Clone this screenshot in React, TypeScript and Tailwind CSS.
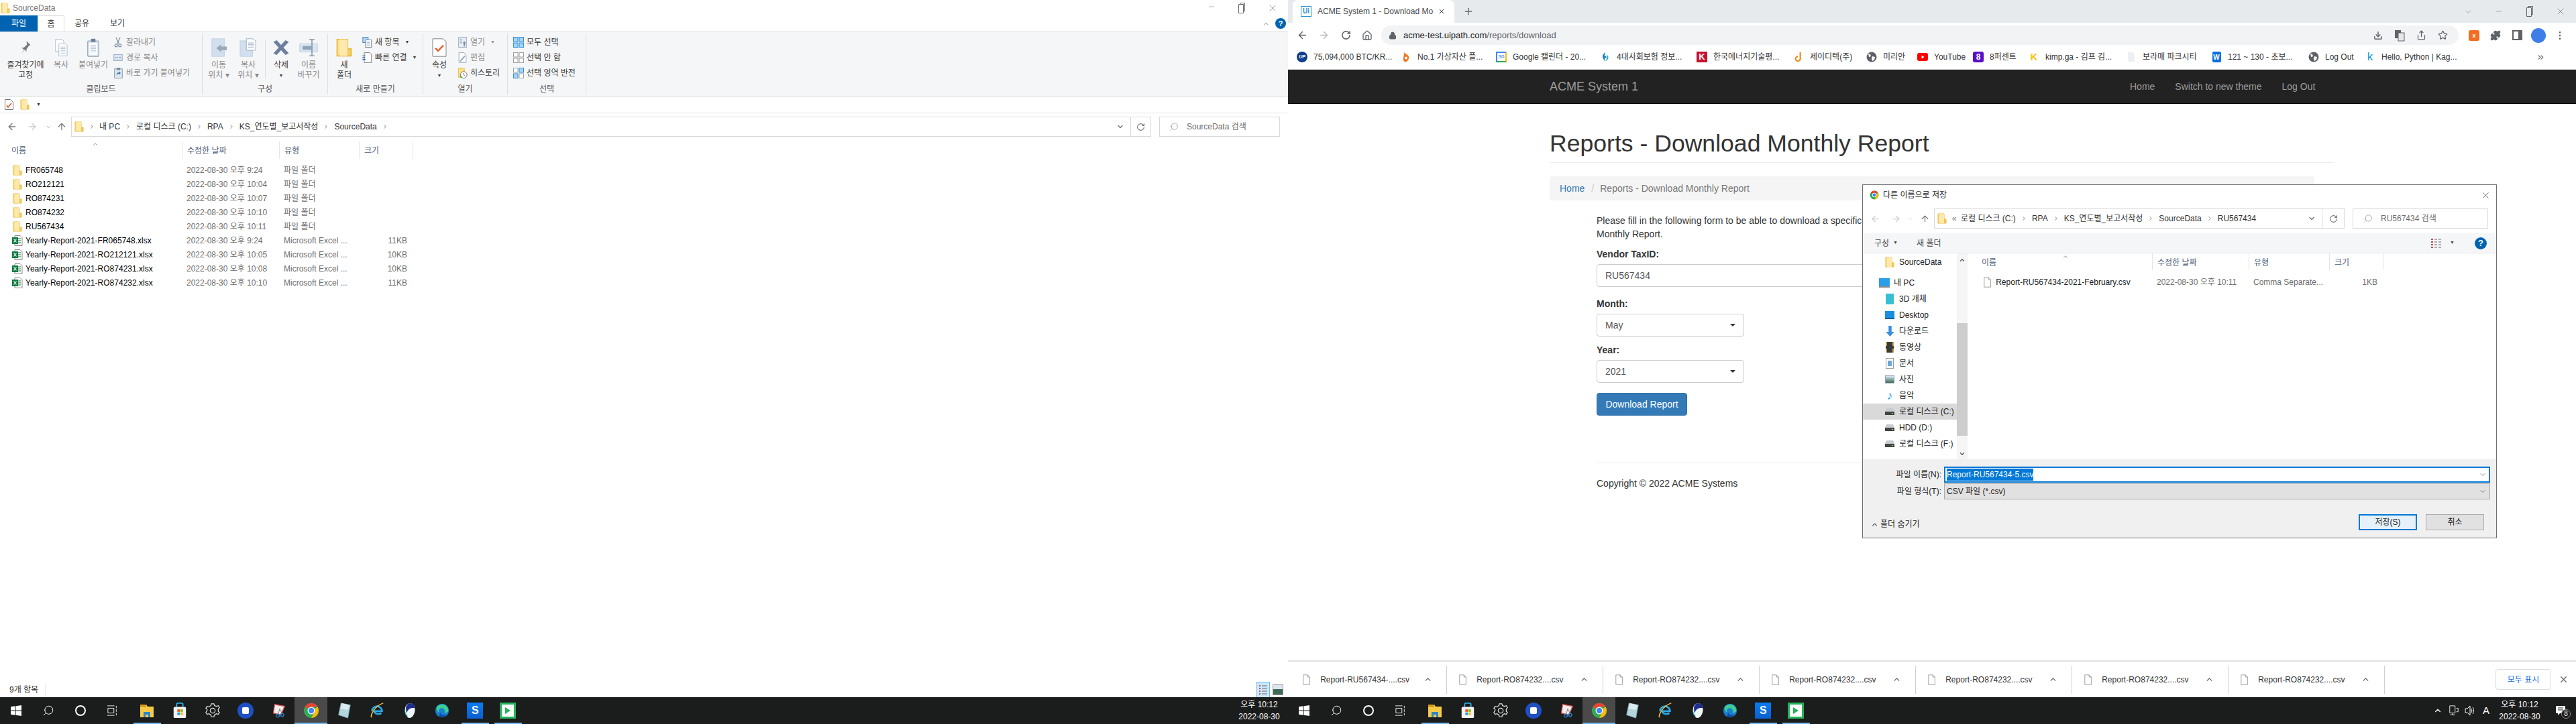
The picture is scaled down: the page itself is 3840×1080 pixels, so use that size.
import type { ReactNode } from "react";
import {
  ArrowLeft,
  ArrowRight,
  ArrowUp,
  ChevronDown,
  ChevronRight,
  ChevronUp,
  ChevronsRight,
  Download,
  EllipsisVertical,
  House,
  Lock,
  Minus,
  Plus,
  Puzzle,
  RotateCw,
  Search,
  Share,
  Star,
  X,
} from "lucide-react";

const Folder = ({ s = 16 }: { s?: number }) => (
  <svg width={s} height={s} viewBox="0 0 16 16" className="shrink-0">
    <path d="M2 1h9v14H2z" fill="#ffe08a" stroke="#e8b93e" />
    <path d="M11 15V9l3 0v6z" fill="#f6cf63" stroke="#e8b93e" />
    <path d="M4 1h7v14H4z" fill="#ffe9ad" />
  </svg>
);

const FileBlank = ({ h = 16 }: { h?: number }) => (
  <svg width={h * 0.7} height={h} viewBox="0 0 14 20" className="shrink-0">
    <path d="M1 1h8l4 4v14H1z" fill="#fff" stroke="#8a8a8a" />
    <path d="M9 1v4h4" fill="none" stroke="#8a8a8a" />
  </svg>
);

const Excel = () => (
  <svg width="16" height="16" viewBox="0 0 16 16" className="shrink-0">
    <path d="M4 .5h8l3 3v12H4z" fill="#fff" stroke="#8a8a8a" />
    <path d="M9 5h4M9 8h4M9 11h4" stroke="#1e7145" />
    <rect x="0" y="3" width="9" height="10" fill="#107c41" />
    <path d="M2.500 5.500l4 5M6.500 5.500l-4 5" stroke="#fff" strokeWidth="1.200" />
  </svg>
);

const Chrome = ({ s = 16 }: { s?: number }) => (
  <svg width={s} height={s} viewBox="0 0 24 24" className="shrink-0">
    <circle cx="12" cy="12" r="11" fill="#34a853" />
    <path d="M12 1a11 11 0 0 1 9.500 5.500H12L5 9 3 5.500A11 11 0 0 1 12 1z" fill="#ea4335" />
    <path d="M21.500 6.500A11 11 0 0 1 12 23l5-9-1-4 5.500-3.500z" fill="#fbbc04" />
    <circle cx="12" cy="12" r="5.500" fill="#fff" />
    <circle cx="12" cy="12" r="4.200" fill="#4285f4" />
  </svg>
);

const Globe = () => (
  <svg width="16" height="16" viewBox="0 0 16 16" className="shrink-0">
    <circle cx="8" cy="8" r="7.500" fill="#5f6368" />
    <path d="M3 3l3 1 1 3-3 1zM9 7l4 1-1 4-3 2-1-4z" fill="#fff" />
  </svg>
);

const Favicon = ({ kind }: { kind: string }) => {
  if (kind === "up")
    return <span className="w-4 h-4 rounded-full bg-[#123f8c] text-white text-[7px] font-bold italic flex items-center justify-center">UP</span>;
  if (kind === "bithumb")
    return (
      <svg width="14" height="16" viewBox="0 0 16 20">
        <path d="M5 1l3 4c4 1 6 4 5 8-1 4-4 6-6 6-3 0-5-3-4-7z" fill="#f37321" />
        <circle cx="8" cy="12" r="2.500" fill="#fff" />
      </svg>
    );
  if (kind === "cal")
    return (
      <span className="w-4 h-4 bg-white border-2 border-[#4285f4] border-b-[#34a853] border-r-[#fbbc04] text-[8px] leading-none text-[#1a73e8] flex items-center justify-center">30</span>
    );
  if (kind === "four")
    return (
      <svg width="14" height="16" viewBox="0 0 16 20">
        <path d="M8 1C3 5 2 9 4 13l4 6c-2-6-2-12 0-18z" fill="#1f78c8" />
        <path d="M10 5c4 3 5 7 2 10l-4 3c3-4 4-9 2-13z" fill="#28b5a0" />
        <circle cx="8" cy="10" r="2" fill="#1f78c8" />
      </svg>
    );
  if (kind === "k")
    return <span className="w-4 h-4 bg-[#c4122f] text-white text-[13px] font-bold flex items-center justify-center">K</span>;
  if (kind === "j")
    return (
      <svg width="14" height="16" viewBox="0 0 16 18">
        <path d="M11 1v11a4 4 0 1 1-4-4" fill="none" stroke="#f08a1d" strokeWidth="2.500" />
      </svg>
    );
  if (kind === "globe") return <Globe />;
  if (kind === "yt")
    return (
      <svg width="16" height="16" viewBox="0 0 16 16">
        <rect y="2" width="16" height="12" rx="3" fill="#f00" />
        <path d="M6.500 5.500v5l4-2.500z" fill="#fff" />
      </svg>
    );
  if (kind === "eight")
    return <span className="w-4 h-4 rounded-[3px] bg-[#5a0fc8] text-white text-[12px] font-bold flex items-center justify-center">8</span>;
  if (kind === "kimp") return <span className="w-4 h-4 text-[#f7c600] text-[15px] font-bold leading-4 text-center">K</span>;
  if (kind === "blank")
    return (
      <svg width="12" height="16" viewBox="0 0 14 20">
        <path d="M1 1h8l4 4v14H1z" fill="#eceff1" />
      </svg>
    );
  if (kind === "w")
    return <span className="w-[13px] h-4 rounded-[2px] bg-[#0b6fe0] text-white text-[10px] font-bold flex items-center justify-center">W</span>;
  return <span className="w-4 h-4 text-[#0f9bd7] text-[17px] leading-4 text-center">k</span>;
};

const IconBox = ({ children }: { children: ReactNode }) => (
  <span className="w-4 h-4 shrink-0 flex items-center justify-center">{children}</span>
);

const LargeButton = ({ w, icon, lines, off, caret }: { w: number; icon: ReactNode; lines: string[]; off?: boolean; caret?: boolean }) => (
  <div className={`flex flex-col items-center shrink-0 ${off ? "text-[#8a8a8a]" : "text-[#3a3a3a]"}`} style={{ width: w }}>
    <div className="h-[39px] flex items-center justify-center">{icon}</div>
    {lines.map((l) => (
      <div key={l} className="h-[15px] leading-[15px] whitespace-nowrap">{l}</div>
    ))}
    {caret && <div className="h-[15px] leading-[15px] text-[7px]">▼</div>}
  </div>
);

const SmallButton = ({ icon, label, off, caret }: { icon: ReactNode; label: string; off?: boolean; caret?: boolean }) => (
  <div className={`h-[22px] flex items-center gap-1 whitespace-nowrap ${off ? "text-[#8a8a8a]" : "text-[#3a3a3a]"}`}>
    <IconBox>{icon}</IconBox>
    <span>{label}</span>
    {caret && <span className="text-[7px] ml-1">▼</span>}
  </div>
);

const RibbonGroup = ({ w, label, children }: { w: number; label: string; children: ReactNode }) => (
  <div className="mt-[2px] h-[91px] flex flex-col border-r border-[#dcdddf] shrink-0" style={{ width: w }}>
    <div className="h-[75px] pt-px flex">{children}</div>
    <div className="h-4 leading-4 text-center text-[#555]">{label}</div>
  </div>
);

const Docs = ({ c = "#9fb3c8" }: { c?: string }) => (
  <svg width="24" height="28" viewBox="0 0 24 34">
    <path d="M2 2h12l3 3v19H2z" fill="#fff" stroke={c} />
    <path d="M8 10h12l3 3v19H8z" fill="#fff" stroke={c} />
    <path d="M11 16h9M11 19h9M11 22h9M11 25h9M11 28h9" stroke={c} />
  </svg>
);

const Selection = ({ a, b }: { a: string; b: string }) => (
  <svg width="16" height="16" viewBox="0 0 16 16">
    <rect x=".5" y=".5" width="6.500" height="6.500" fill={a === "#2f8fe0" ? "#a9d3f5" : "#fff"} stroke={a} />
    <rect x="9" y=".5" width="6.500" height="6.500" fill={b === "#2f8fe0" ? "#a9d3f5" : "#fff"} stroke={b} />
    <rect x=".5" y="9" width="6.500" height="6.500" fill={b === "#2f8fe0" ? "#a9d3f5" : "#fff"} stroke={b} />
    <rect x="9" y="9" width="6.500" height="6.500" fill={a === "#2f8fe0" ? "#a9d3f5" : "#fff"} stroke={a} />
  </svg>
);

const Ribbon = () => (
  <div className="h-[97px] bg-[#f5f6f7] border-y border-[#dadbdc] flex">
    <RibbonGroup w={302} label="클립보드">
      <LargeButton
        w={76}
        lines={["즐겨찾기에", "고정"]}
        icon={
          <svg width="22" height="24" viewBox="0 0 24 32">
            <path d="M14 3l8 8-3 1-5 7 0 5-4-4-7 9 6-9-5-4 5 0 6-6z" fill="#777" />
          </svg>
        }
      />
      <LargeButton w={30} off lines={["복사"]} icon={<Docs />} />
      <div className="w-1 shrink-0" />
      <LargeButton
        w={58}
        off
        lines={["붙여넣기"]}
        icon={
          <svg width="20" height="28" viewBox="0 0 22 34">
            <rect x="1" y="5" width="20" height="28" rx="1" fill="#dfe8f2" stroke="#6f8198" />
            <rect x="4" y="9" width="14" height="21" fill="#fff" />
            <path d="M6 13h10M6 16h10M6 19h10M6 22h10M6 25h10" stroke="#9fb3c8" />
            <rect x="7" y="1" width="8" height="6" fill="#6f8198" />
          </svg>
        }
      />
      <div className="flex flex-col gap-px pt-px">
        <SmallButton
          off
          label="잘라내기"
          icon={
            <svg width="12" height="16" viewBox="0 0 14 20" fill="none" stroke="#7e8ea3" strokeWidth="1.500">
              <path d="M3 1l6 12M11 1L5 13" />
              <circle cx="3.500" cy="16" r="2.500" />
              <circle cx="10.500" cy="16" r="2.500" />
            </svg>
          }
        />
        <SmallButton
          off
          label="경로 복사"
          icon={
            <svg width="16" height="10" viewBox="0 0 16 12">
              <rect x=".5" y=".5" width="15" height="11" fill="#dbe6f3" stroke="#8fa3bb" />
              <path d="M3 6h2M7 6h1M10 6h3" stroke="#4a5f78" />
            </svg>
          }
        />
        <SmallButton
          off
          label="바로 가기 붙여넣기"
          icon={
            <svg width="13" height="16" viewBox="0 0 14 18">
              <rect x=".5" y="2" width="13" height="15.500" fill="#dfe8f2" stroke="#7e8ea3" />
              <rect x="4" y="0" width="6" height="4" fill="#7e8ea3" />
              <path d="M4 13c0-4 2-5 4-5V6l3 3-3 3v-2c-2 0-3 1-4 3z" fill="#4a7ab0" />
            </svg>
          }
        />
      </div>
    </RibbonGroup>
    <RibbonGroup w={187} label="구성">
      <LargeButton
        w={48}
        off
        lines={["이동", "위치 ▾"]}
        icon={
          <svg width="26" height="28" viewBox="0 0 28 36" preserveAspectRatio="none">
            <rect x="3" y="1" width="20" height="34" fill="#d2dfee" stroke="#bfd0e3" />
            <path d="M10 19l8-7v4h9v7h-9v4z" fill="#9aa8b8" />
          </svg>
        }
      />
      <LargeButton
        w={40}
        off
        lines={["복사", "위치 ▾"]}
        icon={
          <svg width="26" height="28" viewBox="0 0 28 36" preserveAspectRatio="none">
            <rect x="1" y="5" width="20" height="30" fill="#d2dfee" stroke="#bfd0e3" />
            <path d="M11 1h10l5 4v18H11z" fill="#fff" stroke="#8fa3bb" />
            <path d="M14 9h9M14 12h9M14 15h9M14 18h9" stroke="#8fa3bb" />
          </svg>
        }
      />
      <div className="ml-[5px] mr-[2px] my-[8px] w-px bg-[#dcdddf]" />
      <LargeButton
        w={42}
        lines={["삭제"]}
        caret
        icon={
          <svg width="26" height="24" viewBox="0 0 26 32" preserveAspectRatio="none">
            <path d="M4 3l18 26M22 3L4 29" stroke="#6d7f9e" strokeWidth="6" />
          </svg>
        }
      />
      <LargeButton
        w={40}
        off
        lines={["이름", "바꾸기"]}
        icon={
          <svg width="28" height="26" viewBox="0 0 28 32" preserveAspectRatio="none">
            <rect x="1" y="9" width="26" height="15" fill="#dbe6f3" stroke="#b4c5d8" />
            <rect x="5" y="13" width="13" height="7" fill="#8ea4bd" />
            <path d="M19 1v30M15 1h8M15 31h8" stroke="#7e8ea3" strokeWidth="1.500" />
          </svg>
        }
      />
    </RibbonGroup>
    <RibbonGroup w={142} label="새로 만들기">
      <LargeButton w={48} lines={["새", "폴더"]} icon={<Folder s={28} />} />
      <div className="w-[2px]" />
      <div className="flex flex-col gap-px pt-px">
        <SmallButton
          caret
          label="새 항목"
          icon={
            <svg width="15" height="16" viewBox="0 0 16 18">
              <rect x=".5" y=".5" width="9" height="9" fill="#bcd9f3" stroke="#3a7fbf" />
              <rect x="5" y="5" width="10" height="12.500" fill="#fff" stroke="#777" />
              <path d="M7 9h6M7 12h6M7 15h6" stroke="#5a8fc0" />
            </svg>
          }
        />
        <SmallButton
          caret
          label="빠른 연결"
          icon={
            <svg width="15" height="16" viewBox="0 0 16 18">
              <path d="M3 .5h9l3 3v14H3z" fill="#fff" stroke="#777" />
              <path d="M0 6h5M0 9h4M0 12h5" stroke="#1f6fc0" strokeWidth="1.500" />
            </svg>
          }
        />
      </div>
    </RibbonGroup>
    <RibbonGroup w={126} label="열기">
      <LargeButton
        w={48}
        lines={["속성"]}
        caret
        icon={
          <svg width="22" height="28" viewBox="0 0 22 34" preserveAspectRatio="none">
            <path d="M1 1h15l5 5v27H1z" fill="#fff" stroke="#777" />
            <path d="M5 18l4 5 8-10" fill="none" stroke="#e8541e" strokeWidth="2.500" />
          </svg>
        }
      />
      <div className="w-[2px]" />
      <div className="flex flex-col gap-px pt-px">
        <SmallButton
          off
          caret
          label="열기"
          icon={
            <svg width="13" height="16" viewBox="0 0 14 18">
              <rect x=".5" y=".5" width="13" height="17" fill="#e7eef6" stroke="#8fa3bb" />
              <path d="M3 4h3M3 7h3M3 10h3" stroke="#7e8ea3" />
              <path d="M10 7l3 4h-2v5H9v-5H7z" fill="#7e8ea3" />
            </svg>
          }
        />
        <SmallButton
          off
          label="편집"
          icon={
            <svg width="13" height="16" viewBox="0 0 14 18">
              <path d="M1 .5h8l4 4v13H1z" fill="#fff" stroke="#8fa3bb" />
              <path d="M3 15L11 6" stroke="#8fa3bb" strokeWidth="2" />
            </svg>
          }
        />
        <SmallButton
          label="히스토리"
          icon={
            <svg width="15" height="16" viewBox="0 0 16 18">
              <rect x="1" y="1" width="10" height="15" fill="#ffe08a" stroke="#e8b93e" />
              <circle cx="10" cy="12" r="5.500" fill="#fff" stroke="#666" />
              <path d="M10 9v3l2 1" stroke="#666" fill="none" />
              <path d="M3 13l2 4 3-1z" fill="#3aa53a" />
            </svg>
          }
        />
      </div>
    </RibbonGroup>
    <RibbonGroup w={117} label="선택">
      <div className="w-2" />
      <div className="flex flex-col gap-px pt-px">
        <SmallButton label="모두 선택" icon={<Selection a="#2f8fe0" b="#2f8fe0" />} />
        <SmallButton label="선택 안 함" icon={<Selection a="#a0a0a0" b="#a0a0a0" />} />
        <SmallButton label="선택 영역 반전" icon={<Selection a="#a0a0a0" b="#2f8fe0" />} />
      </div>
    </RibbonGroup>
    <div className="flex-1" />
  </div>
);

const Crumbs = ({ items, lead }: { items: string[]; lead?: ReactNode }) => (
  <div className="flex items-center text-[#333] whitespace-nowrap">
    {lead}
    {items.map((t, i) => (
      <div key={t} className="flex items-center">
        {i > 0 && (
          <span className="w-6 flex justify-center">
            <ChevronRight size={10} color="#777" />
          </span>
        )}
        <span>{t}</span>
      </div>
    ))}
  </div>
);

const explorerColumns = "flex h-[21px] items-center whitespace-nowrap";

const rows = [
  { n: "FR065748", d: "2022-08-30 오후 9:24", t: "파일 폴더", s: "" },
  { n: "RO212121", d: "2022-08-30 오후 10:04", t: "파일 폴더", s: "" },
  { n: "RO874231", d: "2022-08-30 오후 10:07", t: "파일 폴더", s: "" },
  { n: "RO874232", d: "2022-08-30 오후 10:10", t: "파일 폴더", s: "" },
  { n: "RU567434", d: "2022-08-30 오후 10:11", t: "파일 폴더", s: "" },
  { n: "Yearly-Report-2021-FR065748.xlsx", d: "2022-08-30 오후 9:24", t: "Microsoft Excel ...", s: "11KB" },
  { n: "Yearly-Report-2021-RO212121.xlsx", d: "2022-08-30 오후 10:05", t: "Microsoft Excel ...", s: "10KB" },
  { n: "Yearly-Report-2021-RO874231.xlsx", d: "2022-08-30 오후 10:08", t: "Microsoft Excel ...", s: "10KB" },
  { n: "Yearly-Report-2021-RO874232.xlsx", d: "2022-08-30 오후 10:10", t: "Microsoft Excel ...", s: "11KB" },
];

const Explorer = () => (
  <div className="w-[1920px] h-full flex flex-col bg-white text-[12px] shrink-0">
    <div className="h-[23px] flex items-center">
      <Folder />
      <span className="ml-[3px] text-[#777]">SourceData</span>
      <div className="ml-auto flex text-[#666]">
        <span className="w-[45px] flex justify-center"><Minus size={12} strokeWidth={1} /></span>
        <span className="w-[46px] flex justify-center">
          <svg width="10" height="16" viewBox="0 0 10 16" fill="none" stroke="#666"><path d="M3 2.500V.5h6.500v12H7.500M.5 2.500h7v13h-7z" /></svg>
        </span>
        <span className="w-[46px] flex justify-center"><X size={16} strokeWidth={1} /></span>
      </div>
    </div>
    <div className="h-6 flex items-stretch text-[#333]">
      <div className="w-14 bg-[#0063b1] text-white flex items-center justify-center">파일</div>
      <div className="w-10 border-x border-t border-[#dadbdc] flex items-center justify-center">홈</div>
      <div className="w-[52px] flex items-center justify-center">공유</div>
      <div className="w-[54px] flex items-center justify-center">보기</div>
      <div className="ml-auto flex items-center pr-[3px] gap-[8px]">
        <ChevronUp size={11} color="#777" />
        <span className="w-4 h-4 rounded-full bg-[#0063b1] text-white font-bold text-[11px] flex items-center justify-center">?</span>
      </div>
    </div>
    <Ribbon />
    <div className="h-[25px] border-b border-[#e5e5e5] flex items-center pl-[7px] gap-[9px]">
      <svg width="13" height="16" viewBox="0 0 13 16"><path d="M.5.5h8l4 4v11H.5z" fill="#fff" stroke="#777" /><path d="M3 9l2 3 5-6" fill="none" stroke="#e8541e" strokeWidth="1.500" /></svg>
      <Folder />
      <span className="text-[7px] text-[#333]">▼</span>
    </div>
    <div className="mt-[5px] h-[30px] flex items-center">
      <span className="w-[36px] flex justify-center"><ArrowLeft size={16} color="#777" /></span>
      <span className="w-[24px] flex justify-center"><ArrowRight size={16} color="#ccc" /></span>
      <span className="w-[16px] flex justify-center ml-[4px]"><ChevronDown size={9} color="#999" /></span>
      <span className="w-[24px] flex justify-center"><ArrowUp size={16} color="#777" /></span>
      <div className="ml-[2px] w-[1610px] h-[30px] border border-[#d9d9d9] flex items-center">
        <Crumbs
          items={["내 PC", "로컬 디스크 (C:)", "RPA", "KS_연도별_보고서작성", "SourceData", ""]}
          lead={
            <>
              <span className="ml-[3px]"><Folder s={16} /></span>
              <span className="w-[22px] flex justify-center"><ChevronRight size={10} color="#777" /></span>
            </>
          }
        />
        <span className="ml-auto w-[30px] flex justify-center"><ChevronDown size={12} color="#777" strokeWidth={3} /></span>
        <span className="w-[30px] h-full border-l border-[#d9d9d9] flex items-center justify-center"><RotateCw size={13} color="#777" /></span>
      </div>
      <div className="ml-3 w-[180px] h-[30px] border border-[#d9d9d9] flex items-center pl-[14px] gap-[12px] text-[#6d6d6d]">
        <Search size={14} strokeWidth={1} className="-scale-x-100" />
        <span>SourceData 검색</span>
      </div>
    </div>
    <div className="relative mt-[7px] h-[26px] flex text-[#4c607a]">
      <ChevronUp size={10} color="#777" className="absolute left-[137px] -top-px" />
      <div className="w-[271px] pl-[17px] pt-[5px]">이름</div>
      <div className="w-[145px] pl-[7px] pt-[5px] border-l border-[#e5e5e5]">수정한 날짜</div>
      <div className="w-[119px] pl-[7px] pt-[5px] border-l border-[#e5e5e5]">유형</div>
      <div className="w-[81px] pl-[7px] pt-[5px] border-x border-[#e5e5e5]">크기</div>
    </div>
    <div className="mt-[6px] flex-1">
      {rows.map((r) => (
        <div key={r.n} className={explorerColumns}>
          <div className="w-[271px] pl-[18px] flex items-center gap-[4px] text-black">
            {r.s ? <Excel /> : <Folder />}
            <span>{r.n}</span>
          </div>
          <div className="w-[145px] pl-[7px] text-[#6d6d6d]">{r.d}</div>
          <div className="w-[119px] pl-[7px] text-[#6d6d6d]">{r.t}</div>
          <div className="w-[72px] text-right text-[#6d6d6d]">{r.s}</div>
        </div>
      ))}
    </div>
    <div className="h-[23px] flex items-center pl-[14px] text-[#333]">
      <span>9개 항목</span>
      <span className="ml-[10px] w-px h-4 bg-[#e5e5e5]" />
      <div className="ml-auto h-full flex items-center pr-[7px]">
        <span className="w-5 h-full bg-[#cce8ff] border-x border-t border-[#6bb6ee] flex items-center justify-center">
          <svg width="14" height="16" viewBox="0 0 14 16"><path d="M1 2h2M1 6h2M1 10h2M1 14h2" stroke="#c0504d" strokeWidth="2" /><path d="M5 2h8M5 6h8M5 10h8M5 14h8" stroke="#666" /></svg>
        </span>
        <span className="ml-[4px] w-4 h-4 border border-[#999] bg-[#dbe6f3] flex items-end"><span className="w-full h-2 bg-[#3f6b55]" /></span>
      </div>
    </div>
    <Taskbar>
      <div className="ml-auto pr-[6px] w-[80px] text-center">
        <div className="leading-[18px]">오후 10:12</div>
        <div className="leading-[18px]">2022-08-30</div>
      </div>
    </Taskbar>
  </div>
);

const apps = [
  { id: "explorer", bar: true },
  { id: "store" },
  { id: "settings" },
  { id: "blue" },
  { id: "snip" },
  { id: "chrome", bar: true, active: true },
  { id: "note" },
  { id: "ie" },
  { id: "whale" },
  { id: "edge" },
  { id: "s", bar: true },
  { id: "green", bar: true },
];

const AppIcon = ({ id }: { id: string }) => {
  if (id === "explorer")
    return (
      <svg width="24" height="24" viewBox="0 0 24 24">
        <path d="M2 3h9l2 3h9v16H2z" fill="#f7c948" />
        <path d="M2 3h9v4H2z" fill="#d99a1c" />
        <path d="M7 14h10v8h-3v-4h-4v4H7z" fill="#2f86c8" />
      </svg>
    );
  if (id === "store")
    return (
      <svg width="24" height="24" viewBox="0 0 24 26">
        <path d="M7 7V3a2 2 0 0 1 2-2h6a2 2 0 0 1 2 2v4" fill="none" stroke="#27b3e8" strokeWidth="2" />
        <rect x="2" y="7" width="20" height="18" rx="2" fill="#f3f3f3" />
        <rect x="8" y="11" width="4" height="4" fill="#f25022" />
        <rect x="13" y="11" width="4" height="4" fill="#7fba00" />
        <rect x="8" y="16" width="4" height="4" fill="#00a4ef" />
        <rect x="13" y="16" width="4" height="4" fill="#ffb900" />
      </svg>
    );
  if (id === "settings")
    return (
      <svg width="24" height="24" viewBox="0 0 24 26" fill="none" stroke="#e8e8e8" strokeWidth="1.300">
        <path d="M10 2h4l1 3 3 1 3-1 2 3-2 3v3l2 2-2 3-3-1-3 2-1 3h-4l-1-3-3-2-3 1-2-3 2-3v-2L1 9l2-3 3 1 3-2z" />
        <circle cx="12" cy="13" r="4" />
      </svg>
    );
  if (id === "blue")
    return (
      <span className="w-6 h-6 rounded-full bg-[#1f4fc4] flex items-center justify-center">
        <span className="w-[10px] h-[10px] bg-white rounded-[2px]" />
      </span>
    );
  if (id === "snip")
    return (
      <svg width="24" height="24" viewBox="0 0 24 26">
        <path d="M6 3l16 3-6 14-12-3z" fill="#f4eeee" stroke="#d9534f" strokeWidth="1.500" />
        <path d="M14 10l-2 8M14 10l4 7" stroke="#777" />
        <circle cx="11" cy="21" r="2.500" fill="none" stroke="#2d7fc4" strokeWidth="1.500" />
        <circle cx="18" cy="20" r="2.500" fill="none" stroke="#2d7fc4" strokeWidth="1.500" />
      </svg>
    );
  if (id === "chrome") return <Chrome s={24} />;
  if (id === "note")
    return (
      <svg width="24" height="24" viewBox="0 0 24 26">
        <path d="M7 1l15 3-4 21-15-5z" fill="#b4d5dc" stroke="#7fa7b4" />
        <path d="M8 1l13 3-3 8-12-2z" fill="#dcecee" />
      </svg>
    );
  if (id === "ie")
    return (
      <svg width="24" height="24" viewBox="0 0 24 26">
        <path d="M4 14a8 8 0 0 1 16 0H8c0 4 6 6 11 3" fill="none" stroke="#2aa8e8" strokeWidth="3" />
        <path d="M3 24C1 22 7 6 22 1" fill="none" stroke="#f5c33b" strokeWidth="1.500" />
      </svg>
    );
  if (id === "whale")
    return (
      <svg width="24" height="24" viewBox="0 0 24 26">
        <path d="M12 1c6 0 9 6 8 13-1 6-5 11-9 11-3 0-7-7-7-13 0-6 3-11 8-11z" fill="#eef7f7" />
        <path d="M12 1c5 0 8 4 8 8-6-1-11 1-13 8-3-8-1-16 5-16z" fill="#1d2f8f" />
        <path d="M4 12c1 5 2 7 5 10-3 0-6-4-5-10z" fill="#2bc6b5" />
      </svg>
    );
  if (id === "edge")
    return (
      <svg width="24" height="24" viewBox="0 0 24 26">
        <circle cx="12" cy="13" r="11" fill="#1b7fd1" />
        <path d="M3 8c4-7 16-7 19 3 1 4-3 6-6 5 2-4-2-8-6-7-3 1-4 4-3 7-2-1-4-4-4-8z" fill="#3ccf91" />
        <path d="M9 16c1 4 6 6 11 3-3 5-9 6-13 3z" fill="#0b4ba0" />
      </svg>
    );
  if (id === "s")
    return (
      <span className="w-6 h-6 bg-gradient-to-b from-[#0a7df0] to-[#0a5fd0] flex items-center justify-center text-white font-bold text-[16px]">S</span>
    );
  return (
    <span className="w-6 h-6 bg-[#23b35a] flex items-center justify-center p-[3px]">
      <span className="w-full h-full bg-white flex items-center justify-center">
        <span className="border-l-[8px] border-y-[5px] border-l-[#23b35a] border-y-transparent" />
      </span>
    </span>
  );
};

const Taskbar = ({ children }: { children: ReactNode }) => (
  <div className="h-10 shrink-0 bg-[#1b1c1c] flex items-stretch text-white text-[12px]">
    <span className="w-12 flex items-center justify-center">
      <svg width="16" height="16" viewBox="0 0 18 18" fill="#fff"><path d="M0 2.500l7.500-1v7H0zM8.500 1.400L18 0v8.500H8.500zM0 9.500h7.500v7L0 15.500zM8.500 9.500H18V18l-9.500-1.400z" /></svg>
    </span>
    <span className="w-12 flex items-center justify-center"><Search size={18} strokeWidth={1.300} className="-scale-x-100" color="#fff" /></span>
    <span className="w-12 flex items-center justify-center"><span className="w-4 h-4 rounded-full border-2 border-white" /></span>
    <span className="w-12 flex items-center justify-center">
      <svg width="16" height="16" viewBox="0 0 18 18" fill="none" stroke="#fff"><path d="M0 1h12M0 17h12M1 5h10v8H1zM15 1v4M15 7v4M15 13v4" /></svg>
    </span>
    <div className="ml-[3px] flex items-stretch">
      {apps.map((a) => (
        <div key={a.id} className={`relative w-[48.900px] flex items-center justify-center ${a.active ? "bg-[#4a4a4a]" : ""}`}>
          <AppIcon id={a.id} />
          {a.bar && <span className={`absolute bottom-0 h-[2px] bg-[#76b9ed] ${a.active ? "inset-x-0" : "inset-x-1"}`} />}
        </div>
      ))}
    </div>
    <div className="flex-1 flex items-center">{children}</div>
  </div>
);

const marks = [
  { k: "up", t: "75,094,000 BTC/KR...", w: 155 },
  { k: "bithumb", t: "No.1 가상자산 플...", w: 142 },
  { k: "cal", t: "Google 캘린더 - 20...", w: 155 },
  { k: "four", t: "4대사회보험 정보...", w: 144 },
  { k: "k", t: "한국에너지기술평...", w: 144 },
  { k: "j", t: "제이디텍(주)", w: 109 },
  { k: "globe", t: "미리안", w: 76 },
  { k: "yt", t: "YouTube", w: 83 },
  { k: "eight", t: "8퍼센트", w: 83 },
  { k: "kimp", t: "kimp.ga - 김프 김...", w: 145 },
  { k: "blank", t: "보라매 파크시티", w: 127 },
  { k: "w", t: "121 ~ 130 - 초보...", w: 145 },
  { k: "globe", t: "Log Out", w: 84 },
  { k: "kag", t: "Hello, Python | Kag...", w: 240 },
];

const downloads = [
  "Report-RU567434-....csv",
  "Report-RO874232....csv",
  "Report-RO874232....csv",
  "Report-RO874232....csv",
  "Report-RO874232....csv",
  "Report-RO874232....csv",
  "Report-RO874232....csv",
];

const FormSelect = ({ value }: { value: string }) => (
  <div className="mt-[5px] w-[220px] h-[34px] border border-[#ccc] rounded-[4px] flex items-center pl-3 pr-[12px] text-[#555]">
    <span>{value}</span>
    <span className="ml-auto border-x-[4px] border-t-[4px] border-x-transparent border-t-[#333]" />
  </div>
);

const Browser = () => (
  <div className="relative w-[1920px] h-full flex flex-col bg-white shrink-0 overflow-hidden">
    <div className="h-[34px] bg-[#e7eaed] flex items-stretch text-[12px]">
      <div className="ml-[7px] w-[241px] bg-white rounded-t-[8px] flex items-center pl-3 text-[#45494d]">
        <span className="w-4 h-4 border border-[#2b8fd6] text-[#2b8fd6] text-[10px] font-bold leading-[14px] text-center">Ui</span>
        <span className="ml-[9px] w-[176px] overflow-hidden whitespace-nowrap">ACME System 1 - Download Mo</span>
        <X size={12} strokeWidth={2} color="#555" className="ml-[3px]" />
      </div>
      <span className="ml-[13px] flex items-center"><Plus size={16} color="#5f6368" /></span>
      <div className="ml-auto flex items-center text-[#666]">
        <span className="w-[46px] flex justify-center"><ChevronDown size={13} strokeWidth={1} /></span>
        <span className="w-[46px] flex justify-center"><Minus size={12} strokeWidth={1} /></span>
        <span className="w-[46px] flex justify-center">
          <svg width="10" height="16" viewBox="0 0 10 16" fill="none" stroke="#666"><path d="M3 2.500V.5h6.500v12H7.500M.5 2.500h7v13h-7z" /></svg>
        </span>
        <span className="w-[46px] flex justify-center"><X size={16} strokeWidth={1} /></span>
      </div>
    </div>
    <div className="h-[33px] flex items-end text-[#5f6368]">
      <div className="h-[29px] flex items-center">
        <span className="w-[32px] ml-[5px] flex justify-center"><ArrowLeft size={17} /></span>
        <span className="w-[33px] flex justify-center"><ArrowRight size={17} color="#b8babd" /></span>
        <span className="w-[32px] flex justify-center"><RotateCw size={15} strokeWidth={2.500} /></span>
        <span className="w-[32px] flex justify-center"><House size={16} /></span>
      </div>
      <div className="ml-[5px] w-[1606px] h-[29px] bg-[#f1f3f4] rounded-full flex items-center pl-[11px] text-[13px]">
        <Lock size={12} fill="#5f6368" />
        <span className="ml-[10px] text-[#202124]">acme-test.uipath.com<span className="text-[#5f6368]">/reports/download</span></span>
        <div className="ml-auto flex items-center pr-[8px]">
          <span className="w-8 flex justify-center"><Download size={14} strokeWidth={2.500} /></span>
          <span className="w-8 flex justify-center">
            <svg width="16" height="18" viewBox="0 0 16 18"><rect x="1" y="1" width="9" height="12" fill="#5f6368" /><rect x="6" y="5" width="9" height="12" fill="#e5e7e9" stroke="#5f6368" /></svg>
          </span>
          <span className="w-8 flex justify-center"><Share size={15} /></span>
          <span className="w-8 flex justify-center"><Star size={15} /></span>
        </div>
      </div>
      <div className="h-[29px] flex items-center pl-[7px]">
        <span className="w-[32px] flex justify-center"><span className="w-4 h-4 rounded-[3px] bg-[#f36d21] text-white text-[9px] font-bold text-center leading-4">x</span></span>
        <span className="w-[32px] flex justify-center"><Puzzle size={16} fill="#5f6368" /></span>
        <span className="w-[32px] flex justify-center"><span className="w-[15px] h-[15px] border-2 border-[#5f6368] border-r-[6px]" /></span>
        <span className="w-[32px] flex justify-center"><span className="w-[22px] h-[22px] rounded-full bg-[#3f7ee8]" /></span>
        <span className="w-[32px] flex justify-center"><EllipsisVertical size={16} /></span>
      </div>
    </div>
    <div className="h-[37px] pl-[13px] border-b border-[#d6d6d6] flex items-center text-[12px] text-[#333] whitespace-nowrap">
      {marks.map((m, i) => (
        <div key={i} className="flex items-center gap-[9px] shrink-0" style={{ width: m.w }}>
          <span className="w-4 flex justify-center"><Favicon kind={m.k} /></span>
          <span>{m.t}</span>
        </div>
      ))}
      <ChevronsRight size={13} color="#5f6368" className="ml-[16px]" />
    </div>
    <div className="h-[51px] shrink-0 bg-[#222] border-b border-[#080808] pl-[390px] flex items-center text-[14px] text-[#9d9d9d]">
      <span className="w-[865px] text-[18px]">ACME System 1</span>
      <div className="flex gap-[30px]">
        <span>Home</span>
        <span>Switch to new theme</span>
        <span>Log Out</span>
      </div>
    </div>
    <div className="flex-1 pl-[390px] text-[14px] leading-5 text-[#333]">
      <div className="w-[1170px] mt-[39px] h-[49px] border-b border-[#eee] text-[35.600px] leading-10 whitespace-nowrap">Reports - Download Monthly Report</div>
      <div className="mt-5 w-[1140px] h-9 bg-[#f5f5f5] rounded-[4px] flex items-center pl-[15px]">
        <span className="text-[#337ab7]">Home</span>
        <span className="ml-[10px] text-[#ccc]">/</span>
        <span className="ml-[9px] text-[#777]">Reports - Download Monthly Report</span>
      </div>
      <div className="ml-[70px] w-[780px]">
        <div className="mt-5">Please fill in the following form to be able to download a specific<br />Monthly Report.</div>
        <div className="mt-[10px] font-bold">Vendor TaxID:</div>
        <div className="mt-[5px] h-[34px] border border-[#ccc] rounded-[4px] flex items-center pl-3 text-[#555]">RU567434</div>
        <div className="mt-[15px] font-bold">Month:</div>
        <FormSelect value="May" />
        <div className="mt-[10px] font-bold">Year:</div>
        <FormSelect value="2021" />
        <div className="mt-[15px] w-[135px] h-[34px] rounded-[4px] bg-[#337ab7] border border-[#2e6da4] text-white flex items-center justify-center">Download Report</div>
        <div className="mt-[70px] border-t border-[#eee]" />
        <div className="mt-5">Copyright © 2022 ACME Systems</div>
      </div>
    </div>
    <div className="h-[55px] shrink-0 border-t-2 border-[#e1e1e1] flex items-center pl-1 text-[12px] text-[#333]">
      {downloads.map((d, i) => (
        <div key={i} className="w-[233px] h-[42px] shrink-0 border-r border-[#d0d0d0] flex items-center pl-[18px] whitespace-nowrap">
          <FileBlank h={16} />
          <span className="ml-[15px] w-[154px]">{d}</span>
          <ChevronUp size={13} color="#5f6368" strokeWidth={2.500} />
        </div>
      ))}
      <span className="ml-auto w-[83px] h-[31px] border border-[#dadce0] rounded-[4px] text-[#1a73e8] flex items-center justify-center">모두 표시</span>
      <span className="w-[37px] flex justify-center"><X size={15} color="#5f6368" /></span>
    </div>
    <Taskbar>
      <div className="ml-auto flex items-center h-full">
        <span className="w-6 flex justify-center"><ChevronUp size={14} color="#fff" /></span>
        <span className="w-6 flex justify-center">
          <svg width="16" height="16" viewBox="0 0 16 18" fill="none" stroke="#fff"><path d="M1 1h9v12H1zM6 13v3M2 16h8" /><path d="M12 5h3v6h-3" /></svg>
        </span>
        <span className="w-6 flex justify-center">
          <svg width="16" height="16" viewBox="0 0 16 16" fill="none" stroke="#fff"><path d="M1 5h3l4-4v14l-4-4H1zM10 5c1 2 1 4 0 6M12 3c2 3 2 7 0 10" /></svg>
        </span>
        <span className="w-6 text-center text-[15px]">A</span>
        <div className="w-[76px] text-center">
          <div className="leading-[18px]">오후 10:12</div>
          <div className="leading-[18px]">2022-08-30</div>
        </div>
        <span className="relative w-[46px] flex justify-center">
          <svg width="16" height="16" viewBox="0 0 16 16"><path d="M1 1h14v11H7l-3 3v-3H1z" fill="#fff" /><path d="M4 4h8M4 7h8" stroke="#1b1c1c" /></svg>
          <span className="absolute left-[24px] top-[6px] w-[14px] h-[14px] rounded-full border border-[#888] bg-[#1b1c1c] text-[10px] leading-3 text-center">8</span>
        </span>
      </div>
    </Taskbar>
    <SaveDialog />
  </div>
);

function ArrowDownIcon() {
  return (
    <svg width="15" height="16" viewBox="0 0 16 18"><path d="M5.500 0h5v10H15l-7 8-7-8h4.500z" fill="#3a8ee0" /></svg>
  );
}

const tree = [
  { t: "3D 개체", i: <span className="w-3 h-[16px] bg-[#36bfd3] rounded-[1px]" /> },
  { t: "Desktop", i: <span className="w-[14px] h-3 bg-[#1a8fe0] border-b-2 border-[#0b5fa8]" /> },
  { t: "다운로드", i: <ArrowDownIcon /> },
  { t: "동영상", i: <span className="w-3 h-[16px] bg-[#3a3a3a] border-x-2 border-dashed border-[#caa24a]" /> },
  { t: "문서", i: <span className="w-3 h-[16px] bg-white border border-[#999] flex items-center justify-center"><span className="w-[6px] h-[8px] bg-[#6aa9dc]" /></span> },
  { t: "사진", i: <span className="w-[14px] h-3 border border-[#8fa3bb] bg-gradient-to-b from-[#d6e8f7] to-[#3f6b55]" /> },
  { t: "음악", i: <span className="text-[#1ea0ea] text-[18px] leading-4">♪</span> },
];

const Drive = () => (
  <svg width="14" height="10" viewBox="0 0 14 10"><path d="M2 0h10l2 5H0z" fill="#c8cdd2" /><rect y="5" width="14" height="5" fill="#444" /><rect x="10" y="7" width="2" height="1" fill="#6f6" /></svg>
);

const TreeRow = ({ icon, label, sel }: { icon: ReactNode; label: string; sel?: boolean }) => (
  <div className={`h-6 flex items-center pl-[33px] whitespace-nowrap ${sel ? "bg-[#d9d9d9]" : ""}`}>
    <span className="w-4 -ml-px flex justify-center">{icon}</span>
    <span className="ml-[6px]">{label}</span>
  </div>
);

const SaveDialog = () => (
  <div className="absolute left-[856px] top-[275px] w-[946px] h-[528px] bg-white border border-[#707070] flex flex-col text-[12px] text-[#222]">
    <div className="h-[30px] shrink-0 flex items-center pl-[10px]">
      <Chrome s={14} />
      <span className="ml-[6px]">다른 이름으로 저장</span>
      <X size={15} strokeWidth={1} className="ml-auto mr-[8px]" />
    </div>
    <div className="mt-[5px] h-[30px] shrink-0 flex items-center">
      <span className="w-[36px] flex justify-center"><ArrowLeft size={15} color="#ccc" /></span>
      <span className="w-[26px] flex justify-center"><ArrowRight size={15} color="#ccc" /></span>
      <span className="w-[16px] flex justify-center"><ChevronDown size={9} color="#ccc" /></span>
      <span className="w-[28px] flex justify-center"><ArrowUp size={15} color="#777" /></span>
      <div className="w-[612px] h-[30px] border border-[#d9d9d9] flex items-center">
        <Crumbs
          items={["로컬 디스크 (C:)", "RPA", "KS_연도별_보고서작성", "SourceData", "RU567434"]}
          lead={
            <>
              <span className="ml-[3px]"><Folder s={16} /></span>
              <span className="w-[20px] text-center text-[#777]">«</span>
            </>
          }
        />
        <span className="ml-auto w-[30px] flex justify-center"><ChevronDown size={12} color="#777" strokeWidth={3} /></span>
        <span className="w-[33px] h-full border-l border-[#d9d9d9] flex items-center justify-center"><RotateCw size={13} color="#777" /></span>
      </div>
      <div className="ml-3 w-[202px] h-[30px] border border-[#d9d9d9] flex items-center pl-[15px] gap-[12px] text-[#6d6d6d]">
        <Search size={14} strokeWidth={1} className="-scale-x-100" />
        <span>RU567434 검색</span>
      </div>
    </div>
    <div className="mt-[7px] h-[30px] shrink-0 bg-[#f5f6f7] border-b border-[#e5e5e5] flex items-center pl-[17px] text-[#444]">
      <span>구성</span>
      <span className="ml-[6px] text-[7px]">▼</span>
      <span className="ml-[28px]">새 폴더</span>
      <svg width="16" height="14" viewBox="0 0 16 14" className="ml-auto"><path d="M1 1h3M1 5h3M1 9h3M1 13h3" stroke="#c0504d" strokeWidth="2" /><path d="M6 1h4M12 1h4M6 5h4M12 5h4M6 9h4M12 9h4M6 13h4M12 13h4" stroke="#666" /></svg>
      <span className="ml-[13px] text-[7px]">▼</span>
      <span className="ml-[30px] mr-[14px] w-[18px] h-[18px] rounded-full bg-[#0063b1] text-white font-bold text-[13px] flex items-center justify-center">?</span>
    </div>
    <div className="h-[307px] shrink-0 flex">
      <div className="w-[140px] shrink-0 pt-px overflow-hidden">
        <div className="h-[24px] flex items-center pl-[33px] whitespace-nowrap">
          <span className="w-4 -ml-px flex justify-center"><Folder /></span>
          <span className="ml-[6px]">SourceData</span>
        </div>
        <div className="mt-[7px] h-6 flex items-center pl-[24px]">
          <span className="w-4 h-[14px] bg-[#2a9fe8] border-b-2 border-[#888]" />
          <span className="ml-[6px]">내 PC</span>
        </div>
        {tree.map((r) => (
          <TreeRow key={r.t} icon={r.i} label={r.t} />
        ))}
        <TreeRow sel label="로컬 디스크 (C:)" icon={<Drive />} />
        <TreeRow label="HDD (D:)" icon={<Drive />} />
        <TreeRow label="로컬 디스크 (F:)" icon={<Drive />} />
      </div>
      <div className="w-4 shrink-0 bg-[#f5f5f5] flex flex-col items-center">
        <ChevronUp size={10} strokeWidth={3} color="#555" className="mt-[5px]" />
        <div className="mt-[89px] w-full h-[168px] bg-[#cdcdcd]" />
        <ChevronDown size={10} strokeWidth={3} color="#555" className="mt-[22px]" />
      </div>
      <div className="relative flex-1">
        <ChevronUp size={10} color="#777" className="absolute left-[141px] top-0" />
        <div className="h-[25px] flex text-[#4c607a]">
          <div className="w-[275px] pl-[21px] pt-[5px]">이름</div>
          <div className="w-[144px] pl-[7px] pt-[5px] border-l border-[#e5e5e5]">수정한 날짜</div>
          <div className="w-[120px] pl-[7px] pt-[5px] border-l border-[#e5e5e5]">유형</div>
          <div className="w-[81px] pl-[7px] pt-[5px] border-x border-[#e5e5e5]">크기</div>
        </div>
        <div className="mt-[7px] h-[21px] flex items-center whitespace-nowrap">
          <div className="w-[275px] pl-[24px] flex items-center gap-[7px]">
            <FileBlank h={16} />
            <span>Report-RU567434-2021-February.csv</span>
          </div>
          <div className="w-[144px] pl-[7px] text-[#6d6d6d]">2022-08-30 오후 10:11</div>
          <div className="w-[106px] pl-[7px] text-[#6d6d6d]">Comma Separate...</div>
          <div className="w-[86px] text-right text-[#6d6d6d]">1KB</div>
        </div>
      </div>
    </div>
    <div className="flex-1 bg-[#f0f0f0] flex flex-col">
      <div className="mt-[11px] h-[23px] flex items-center">
        <span className="w-[121px] text-right pr-[4px]">파일 이름(N):</span>
        <div className="w-[814px] h-[24px] bg-white border-2 border-[#0078d7] flex items-center pl-[2px]">
          <span className="bg-[#0078d7] text-white leading-[18px]">Report-RU567434-5.csv</span>
          <ChevronDown size={12} strokeWidth={1} className="ml-auto mr-[3px]" />
        </div>
      </div>
      <div className="mt-[2px] h-[23px] flex items-center">
        <span className="w-[121px] text-right pr-[4px]">파일 형식(T):</span>
        <div className="w-[814px] h-[24px] bg-[#e1e1e1] border border-[#adadad] flex items-center pl-[3px]">
          <span>CSV 파일 (*.csv)</span>
          <ChevronDown size={12} strokeWidth={1} className="ml-auto mr-[4px]" />
        </div>
      </div>
      <div className="mt-[23px] h-6 flex items-center">
        <ChevronUp size={11} strokeWidth={3} color="#555" className="ml-[12px] mt-[6px]" />
        <span className="ml-[3px] mt-[6px]">폴더 숨기기</span>
        <span className="ml-auto w-[87px] h-6 bg-[#e5f1fb] border-2 border-[#0078d7] flex items-center justify-center">저장(S)</span>
        <span className="ml-[13px] mr-[18px] w-[87px] h-6 bg-[#e1e1e1] border border-[#adadad] flex items-center justify-center">취소</span>
      </div>
    </div>
  </div>
);

export default function App() {
  return (
    <div className="w-[3840px] h-[1080px] flex overflow-hidden bg-white [font-family:'Liberation_Sans','Noto_Sans_CJK_KR',sans-serif]">
      <Explorer />
      <Browser />
    </div>
  );
}
